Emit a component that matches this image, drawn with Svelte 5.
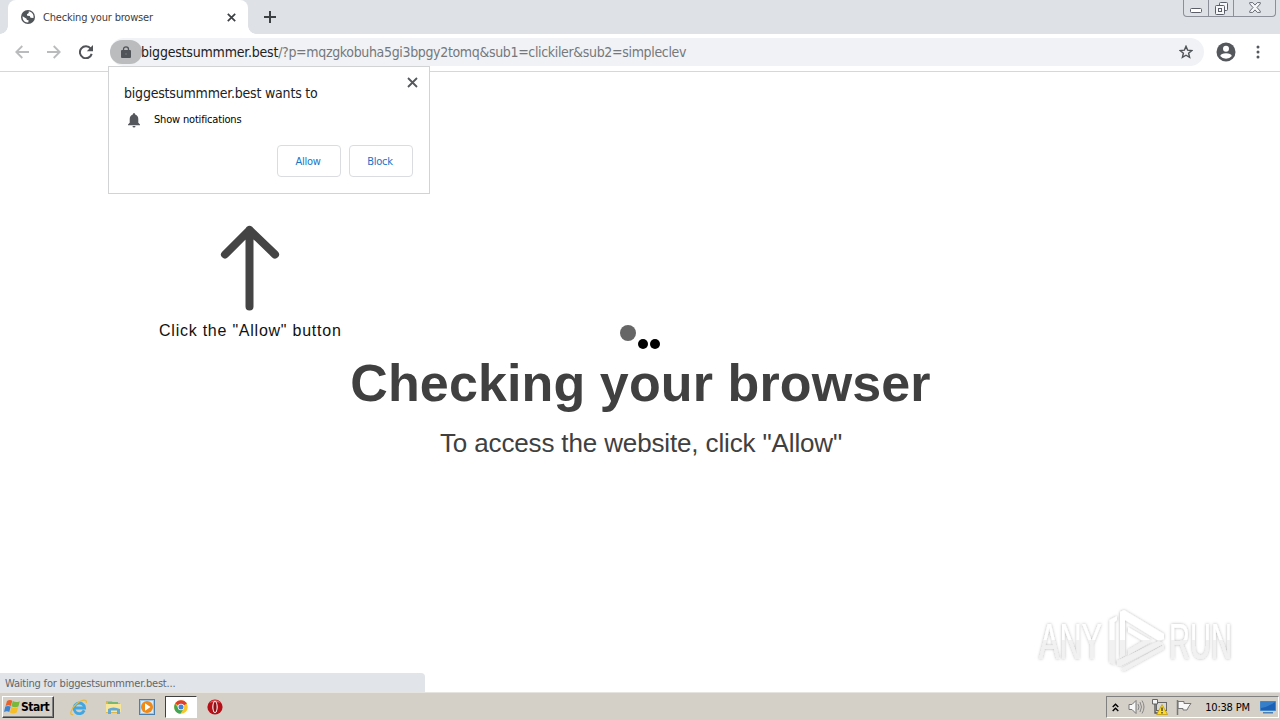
<script>
    let title = "Checking your browser";
    let host = "biggestsummmer.best";
    let query = "/?p=mqzgkobuha5gi3bpgy2tomq&sub1=clickiler&sub2=simpleclev";
    let showPrompt = true;

    function closePrompt() {
        showPrompt = false;
    }
</script>

<div class="screen">
    <div class="tabstrip">
        <div class="edge"></div>
        <div class="tab">
            <svg class="globe" width="14" height="14" viewBox="0 0 14 14">
                <circle cx="7" cy="7" r="7" fill="#50555a"/>
                <path d="M1.6 6.2 L4.8 8.2 Q6 8.5 5.8 10 L7.6 10.2 L7.3 12.6 Q2.5 12.5 1.6 8Z M7.6 1.5 L7.8 3 L5.9 4.3 L6.2 5.8 L8.8 5.9 L9.5 7.8 L12.5 8 Q13.2 3 8.6 1.5Z" fill="#fff"/>
            </svg>
            <span class="tabtitle">{title}</span>
            <svg width="9" height="9" viewBox="0 0 9 9"><path d="M.8 .8 L8.2 8.2 M8.2 .8 L.8 8.2" stroke="#3c4043" stroke-width="1.7"/></svg>
        </div>
        <div class="edge right"></div>
        <svg class="plus" width="12" height="12" viewBox="0 0 12 12"><path d="M6 0 V12 M0 6 H12" stroke="#3c4043" stroke-width="2"/></svg>
        <div class="controls">
            <div class="control"><svg width="12" height="5" viewBox="0 0 12 5"><rect x=".5" y=".5" width="11" height="4" rx="1" fill="#fff" stroke="#5b5e68"/></svg></div>
            <div class="control middle"><svg width="13" height="13" viewBox="0 0 13 13" fill="#f6f7f9" stroke="#5b5e68"><rect x="4.5" y=".5" width="8" height="8" rx="1"/><rect x=".5" y="3.5" width="9" height="9" rx="1"/><rect x="3.5" y="6.5" width="3" height="3"/></svg></div>
            <div class="control last"><svg width="12" height="11" viewBox="0 0 12 11"><path d="M.7 .6 H3.7 L6 3.1 L8.3 .6 H11.3 V1.8 L8 5.5 L11.3 9.2 V10.4 H8.3 L6 7.9 L3.7 10.4 H.7 V9.2 L4 5.5 L.7 1.8Z" fill="#f6f7f9" stroke="#5b5e68" stroke-width=".9"/></svg></div>
        </div>
    </div>

    <div class="toolbar">
        <svg class="nav" width="14" height="14" viewBox="0 0 14 14"><path d="M14 7 H1.5 M7.3 1 L1.3 7 L7.3 13" fill="none" stroke="#b9bbbd" stroke-width="1.8"/></svg>
        <svg class="nav" width="14" height="14" viewBox="0 0 14 14"><path d="M0 7 H12.5 M6.7 1 L12.7 7 L6.7 13" fill="none" stroke="#b9bbbd" stroke-width="1.8"/></svg>
        <svg class="reload" width="14" height="14" viewBox="0 0 14 14"><path d="M11.7 3.6 A6 6 0 1 0 12.7 8.9" fill="none" stroke="#505357" stroke-width="2"/><path d="M14 0 V6.2 H7.8Z" fill="#505357"/></svg>
        <div class="omnibox">
            <div class="lock"><svg width="10" height="12" viewBox="0 0 10 12"><rect y="4" width="10" height="8" rx="1" fill="#505357"/><path d="M2.5 5 V3.3 A2.5 2.5 0 0 1 7.5 3.3 V5" fill="none" stroke="#505357" stroke-width="1.3"/><circle cx="5" cy="8" r="1" fill="#6a6c6e"/></svg></div>
            <div class="url"><span class="host">{host}</span><span class="query">{query}</span></div>
            <svg class="star" width="14" height="14" viewBox="0 0 14 14"><path d="M7 1.3 L8.6 5.1 L12.8 5.5 L9.6 8.2 L10.6 12.4 L7 10.2 L3.4 12.4 L4.4 8.2 L1.2 5.5 L5.4 5.1Z" fill="none" stroke="#505357" stroke-width="1.4"/></svg>
        </div>
        <svg class="profile" width="20" height="20" viewBox="0 0 20 20"><circle cx="10" cy="10" r="9.5" fill="#54575c"/><circle cx="10" cy="6.7" r="3" fill="#fff"/><path d="M4.2 14 Q5 11.4 10 11.3 Q15 11.4 15.8 14 Q13.5 16.8 10 16.8 Q6.5 16.8 4.2 14Z" fill="#fff"/></svg>
        <svg width="4" height="14" viewBox="0 0 4 14" fill="#54575c"><circle cx="2" cy="2" r="1.5"/><circle cx="2" cy="7" r="1.5"/><circle cx="2" cy="12" r="1.5"/></svg>
    </div>

    <div class="page">
        <div class="loader">
            <span class="ball big"></span>
            <span class="ball"></span>
            <span class="ball"></span>
        </div>
        <h1>{title}</h1>
        <p class="message">To access the website, click "Allow"</p>

        <div class="hint">
            <svg width="60" height="86" viewBox="0 0 60 86"><path d="M29.5 5 V81.5 M5 29.5 L29.5 5 L55 29.5" fill="none" stroke="#444" stroke-width="8" stroke-linecap="round" stroke-linejoin="round"/></svg>
            <span>Click the "Allow" button</span>
        </div>

        <div class="watermark">
            <svg width="220" height="76" viewBox="0 0 220 76">
                <defs>
                    <linearGradient id="shade" gradientUnits="userSpaceOnUse" x1="0" y1="0" x2="0" y2="76">
                        <stop offset=".52" stop-color="#fff"/>
                        <stop offset=".53" stop-color="#f1f1f1"/>
                    </linearGradient>
                    <filter id="glow" x="-10%" y="-20%" width="120%" height="140%">
                        <feDropShadow dx="0" dy="0" stdDeviation="1.8" flood-color="#000" flood-opacity=".3"/>
                    </filter>
                </defs>
                <g filter="url(#glow)" fill="url(#shade)">
                    <text x="9" y="59" textLength="63" lengthAdjust="spacingAndGlyphs">ANY</text>
                    <text x="139" y="59" textLength="63" lengthAdjust="spacingAndGlyphs">RUN</text>
                    <path d="M79.500 20 L87 16 V20 L84.500 22 V65 L79.500 62Z"/>
                    <path d="M90 12 L94 10 L134 34 V39 L129 41 L95 20 V55 L90 58Z"/>
                    <path d="M98 27 L122 41 L98 55 V50 L113 41 L98 32Z"/>
                    <path d="M87 61 L129 41 L133 44 L90 66 L87 65Z M91 69 L134 45 V49 L94 71Z"/>
                </g>
            </svg>
        </div>

        <div class="status">Waiting for {host}...</div>
    </div>

    <div class="taskbar">
        <button class="start">
            <svg width="17" height="16" viewBox="0 0 17 16"><path d="M3 2 Q6 0 8.3 1.8 L6.9 7 Q4.5 5.500 1.6 7Z" fill="#e8622c"/><path d="M8.800 2 Q12 4 15.8 2.2 L14.4 7.5 Q11 9 7.4 7.3Z" fill="#79b83c"/><path d="M1.3 7.600 Q4 6.2 6.7 7.600 L5.3 13 Q3 11.5 0 13Z" fill="#3c83d1"/><path d="M7.300 8 Q11 9.700 14.1 8.2 L12.7 13.6 Q9 15.4 5.900 13.5Z" fill="#f6bd27"/></svg>
            <span>Start</span>
        </button>
        <div class="app">
            <svg width="18" height="17" viewBox="0 0 18 17"><path d="M14.2 11.4 A5.3 5.3 0 1 1 14.600 9 H5" fill="none" stroke="#3fa7e3" stroke-width="2.8"/><path d="M3.2 15.5 C-1 17 .5 10 6.5 4.8 C11.5 .5 17 -.5 16.3 3.8" fill="none" stroke="#e9b93c" stroke-width="1.2"/></svg>
        </div>
        <div class="app">
            <svg width="17" height="16" viewBox="0 0 17 16"><path d="M1 2 H7 L8 4 H15 V14 H1Z" fill="#dfb64c"/><rect x="3" y="3" width="10" height="3" fill="#77b974"/><path d="M1 5 H16 V13 H1Z" fill="#f8e69a"/><path d="M3 15 V10 Q8 7 15 10 V15 H12 V11.500 H6 V15Z" fill="#63a9d5"/></svg>
        </div>
        <div class="app">
            <svg width="16" height="16" viewBox="0 0 16 16"><rect x=".5" y=".5" width="15" height="15" fill="#9fc7e7" stroke="#4c7fac"/><rect x="2" y="2" width="12" height="12" fill="#d9eaf7"/><circle cx="8" cy="8" r="6" fill="#ef8918"/><path d="M6 4.3 L11.5 8 L6 11.7Z" fill="#fff"/></svg>
        </div>
        <div class="app active">
            <svg width="14" height="14" viewBox="0 0 14 14"><circle cx="7" cy="7" r="6.8" fill="#f9c62b"/><path d="M7 7 L1.1 3.6 A6.8 6.8 0 0 1 12.9 3.6Z" fill="#df3f32"/><path d="M1.1 3.6 A6.8 6.8 0 0 0 6.4 13.8 L9.7 8.5 L4.3 8.5Z" fill="#43a454"/><circle cx="7" cy="7" r="3.2" fill="#fff"/><circle cx="7" cy="7" r="2.5" fill="#4283dc"/></svg>
        </div>
        <div class="app">
            <svg width="16" height="16" viewBox="0 0 16 16"><circle cx="8" cy="8" r="7.6" fill="#b50f18"/><path d="M2 4 Q8 -2 14 4 Q8 2 2 4Z" fill="#e65b5b"/><ellipse cx="8" cy="8" rx="2.7" ry="5.9" fill="#fff"/><ellipse cx="8" cy="8" rx="1.6" ry="5" fill="#8d1218"/></svg>
        </div>
        <div class="tray">
            <svg class="chevrons" width="7" height="9" viewBox="0 0 7 9"><path d="M.7 4 L3.5 1.2 L6.3 4 M.7 8 L3.5 5.2 L6.3 8" fill="none" stroke="#000" stroke-width="1.4"/></svg>
            <svg class="speaker" width="17" height="16" viewBox="0 0 17 16"><path d="M1 5.5 H4 L8 1.5 V14.5 L4 10.5 H1Z" fill="#f8f8f8" stroke="#777"/><path d="M10 5 Q12 8 10 11 M12 3 Q15 8 12 13 M14 1.5 Q18 8 14 14.5" fill="none" stroke="#888"/></svg>
            <svg class="network" width="16" height="16" viewBox="0 0 16 16"><rect x="4.5" y="3.5" width="10" height="8" fill="#d8d8d8" stroke="#666"/><path d="M.5 .5 H5.500 V5 H.5Z" fill="#f4f4f4" stroke="#666"/><path d="M3 5 V14 H7" fill="none" stroke="#555" stroke-width="1.3"/><path d="M10 5.5 L15.5 15.5 H4.7Z" fill="#ffdc22" stroke="#b99400" stroke-width=".7"/><path d="M10 8.5 V12 M10 13 V14.4" stroke="#333" stroke-width="1.3"/></svg>
            <svg class="flag" width="16" height="15" viewBox="0 0 16 15"><path d="M2 1.500 H8 V3.5 H15 L12.8 6.5 L11 10 H7 V8.5 H2Z" fill="#f8f8f8" stroke="#777"/><path d="M1.5 0 V15" stroke="#777" stroke-width="1.500"/></svg>
            <span class="time">10:38 PM</span>
            <svg width="16" height="14" viewBox="0 0 16 14"><path d="M.5 1.5 H15.5 V10.5 H.5Z" fill="#1c61b5" stroke="#4686c7"/><path d="M1 8 Q8 7 15 2 V2 H1Z" fill="#387fca"/><path d="M3 12 H13 V13.5 H3Z" fill="#4b80b5"/></svg>
        </div>
    </div>

    {#if showPrompt}
        <div class="prompt">
            <div class="prompthead">
                <span class="wants">{host} wants to</span>
                <button class="close" aria-label="Close" on:click={closePrompt}>
                    <svg width="11" height="11" viewBox="0 0 11 11"><path d="M1 1 L10 10 M10 1 L1 10" stroke="#54575c" stroke-width="1.8"/></svg>
                </button>
            </div>
            <div class="permission">
                <svg width="12" height="15" viewBox="0 0 12 15"><path d="M6 0 Q7.2 0 7.2 1.5 Q10.3 2.5 10.3 6 V9.8 L12 11.5 V12.3 H0 V11.5 L1.7 9.8 V6 Q1.7 2.5 4.8 1.5 Q4.8 0 6 0Z M4.5 13 H7.5 Q7.5 14.6 6 14.6 Q4.5 14.6 4.5 13Z" fill="#54575c"/></svg>
                <span>Show notifications</span>
            </div>
            <div class="buttons">
                <button on:click={closePrompt}>Allow</button>
                <button on:click={closePrompt}>Block</button>
            </div>
        </div>
    {/if}
</div>

<style>
    :global(body) {
        margin: 0;
        overflow: hidden;
    }

    .screen {
        position: relative;
        display: flex;
        flex-direction: column;
        width: 1280px;
        height: 720px;
        background-color: #fff;
        font-family: "DejaVu Sans Condensed", "DejaVu Sans", sans-serif;
        font-size: 11px;
    }

    button {
        font: inherit;
        padding: 0;
    }

    svg {
        display: block;
        flex-shrink: 0;
    }

    .tabstrip {
        display: flex;
        height: 34px;
        background-color: #dee1e6;
    }

    .edge {
        width: 8px;
        background: radial-gradient(circle at 0 26px, transparent 7.5px, #fff 8px);
        clip-path: inset(26px 0 0);
    }

    .edge.right {
        background: radial-gradient(circle at 8px 26px, transparent 7.5px, #fff 8px);
    }

    .tab {
        box-sizing: border-box;
        display: flex;
        align-items: center;
        width: 240px;
        padding: 0 12px 0 13px;
        border-radius: 8px 8px 0 0;
        background-color: #fff;
    }

    .tabtitle {
        flex: 1;
        margin-left: 8px;
        color: #3c4043;
        letter-spacing: -0.19px;
        white-space: nowrap;
    }

    .plus {
        margin: 11px 0 0 8px;
    }

    .controls {
        box-sizing: border-box;
        display: flex;
        height: 17px;
        margin: 0 4px 0 auto;
        border: 1px solid #8c8f98;
        border-top: none;
        border-radius: 0 0 4px 4px;
    }

    .control {
        box-sizing: border-box;
        display: flex;
        justify-content: center;
        align-items: flex-end;
        width: 25px;
        padding-bottom: 3px;
        border-right: 1px solid #8c8f98;
    }

    .control.middle {
        padding-bottom: 1px;
    }

    .control.last {
        width: 41px;
        border: none;
    }

    .toolbar {
        box-sizing: border-box;
        display: flex;
        align-items: center;
        height: 38px;
        padding: 0 20px 1px 15px;
        border-bottom: 1px solid #d6d7d9;
    }

    .nav {
        margin-right: 18px;
    }

    .omnibox {
        box-sizing: border-box;
        display: flex;
        align-items: center;
        width: 1094px;
        height: 28px;
        margin-left: 17px;
        padding-right: 11px;
        border-radius: 14px;
        background-color: #f0f2f5;
    }

    .lock {
        display: flex;
        align-items: center;
        justify-content: center;
        width: 32px;
        height: 24px;
        border-radius: 12px;
        background-color: #babcbe;
    }

    .url {
        flex: 1;
        margin-left: -1px;
        color: #74787c;
        font-size: 14px;
        white-space: nowrap;
    }

    .host {
        color: #202124;
        letter-spacing: -0.2px;
    }

    .query {
        letter-spacing: -0.34px;
    }

    .profile {
        margin: 0 20px 0 12px;
    }

    .page {
        position: relative;
        display: flex;
        flex-direction: column;
        align-items: center;
        height: 620px;
        font-family: "Liberation Sans", Arial, sans-serif;
    }

    .loader {
        display: flex;
        align-items: flex-end;
        gap: 2px;
        height: 24px;
        margin-top: 253px;
    }

    .ball {
        width: 10px;
        height: 10px;
        border-radius: 50%;
        background-color: #000;
    }

    .ball.big {
        width: 16px;
        height: 16px;
        margin-bottom: 8px;
        background-color: #666;
    }

    h1 {
        margin: 4px 0 0;
        padding-left: 1px;
        color: #404040;
        font-size: 52px;
        line-height: 60px;
        letter-spacing: 0.12px;
        white-space: nowrap;
    }

    .message {
        margin: 15px 0 0;
        padding-left: 2px;
        color: #404040;
        font-size: 26px;
        line-height: 30px;
        letter-spacing: -0.14px;
        white-space: nowrap;
    }

    .hint {
        position: absolute;
        left: 159px;
        top: 153px;
        display: flex;
        flex-direction: column;
        align-items: center;
        gap: 11px;
        color: #111;
        font-size: 16px;
        line-height: 18px;
        letter-spacing: 0.76px;
        white-space: nowrap;
    }

    .watermark {
        position: absolute;
        right: 30px;
        bottom: 16px;
    }

    .watermark text {
        font-family: "Liberation Sans", Arial, sans-serif;
        font-size: 50px;
    }

    .status {
        position: absolute;
        left: 0;
        bottom: 0;
        box-sizing: border-box;
        width: 425px;
        height: 19px;
        padding-left: 5px;
        border-radius: 0 4px 0 0;
        background-color: #e1e4e8;
        color: #62666a;
        font-family: "DejaVu Sans Condensed", "DejaVu Sans", sans-serif;
        line-height: 21px;
        letter-spacing: -0.2px;
    }

    .taskbar {
        box-sizing: border-box;
        display: flex;
        align-items: center;
        height: 28px;
        padding: 1px 1px 0 2px;
        border-top: 1px solid #e6e4df;
        background-color: #d4d0c8;
    }

    .start {
        box-sizing: border-box;
        display: flex;
        align-items: center;
        width: 52px;
        height: 22px;
        padding-left: 1px;
        border: 1px solid;
        border-color: #fff #404040 #404040 #fff;
        box-shadow: inset -1px -1px #808080;
        background-color: #d4d0c8;
        color: #000;
        font-size: 12px;
        font-weight: bold;
        letter-spacing: -0.5px;
    }

    .app {
        display: flex;
        align-items: center;
        justify-content: center;
        width: 34px;
        height: 22px;
    }

    .start + .app {
        margin-left: 8px;
    }

    .app.active {
        box-sizing: border-box;
        width: 32px;
        margin: 0 1px;
        border: 1px solid;
        border-color: #404040 #fff #fff #404040;
        background-color: #fff;
    }

    .tray {
        box-sizing: border-box;
        display: flex;
        align-items: center;
        width: 173px;
        height: 22px;
        margin-left: auto;
        padding: 0 2px 0 5px;
        border: 1px solid;
        border-color: #808080 #fff #fff #808080;
        color: #000;
    }

    .speaker {
        margin-left: 9px;
    }

    .network {
        margin-left: 7px;
    }

    .flag {
        margin-left: 8px;
    }

    .time {
        margin: 0 auto;
        padding-left: 3px;
        letter-spacing: -0.2px;
        white-space: nowrap;
    }

    .prompt {
        position: absolute;
        left: 108px;
        top: 66px;
        box-sizing: border-box;
        width: 322px;
        height: 128px;
        padding: 10px 11px 0 15px;
        border: 1px solid #d2d3d5;
        background-color: #fff;
        color: #202124;
    }

    .prompthead {
        display: flex;
        justify-content: space-between;
        height: 34px;
    }

    .wants {
        margin-top: 7px;
        font-size: 14px;
        line-height: 18px;
        letter-spacing: -0.2px;
    }

    .close {
        height: 11px;
        border: none;
        background: none;
    }

    .permission {
        display: flex;
        align-items: center;
        gap: 14px;
        height: 18px;
        padding-left: 4px;
        color: #000;
    }

    .permission span {
        margin-top: -2px;
        letter-spacing: -0.18px;
    }

    .buttons {
        display: flex;
        justify-content: flex-end;
        gap: 8px;
        margin: 16px 5px 0 0;
    }

    .buttons button {
        box-sizing: border-box;
        width: 64px;
        height: 32px;
        padding-right: 2px;
        border: 1px solid #dadce0;
        border-radius: 4px;
        background-color: #fff;
        color: #1a73c8;
        letter-spacing: -0.3px;
    }
</style>
